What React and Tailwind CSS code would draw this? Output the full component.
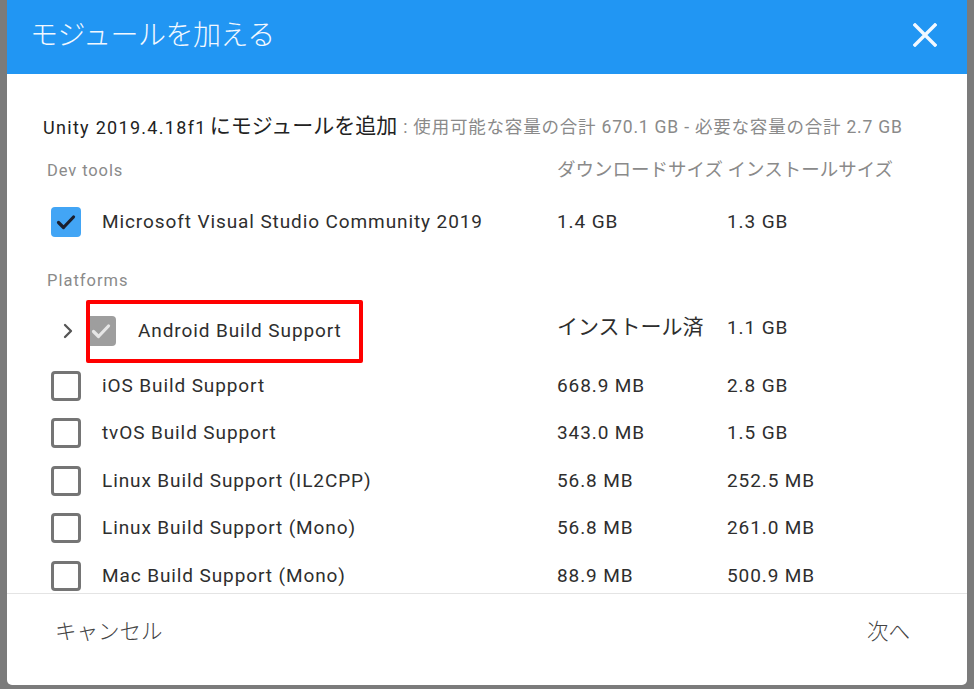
import { ChevronRight } from 'lucide-react';

const jp = { fontFamily: 'Roboto, "Noto Sans CJK JP", sans-serif' };

const platforms = [
  { name: 'iOS Build Support', dl: '668.9 MB', size: '2.8 GB' },
  { name: 'tvOS Build Support', dl: '343.0 MB', size: '1.5 GB' },
  { name: 'Linux Build Support (IL2CPP)', dl: '56.8 MB', size: '252.5 MB' },
  { name: 'Linux Build Support (Mono)', dl: '56.8 MB', size: '261.0 MB' },
  { name: 'Mac Build Support (Mono)', dl: '88.9 MB', size: '500.9 MB' },
];

function Check({ color = '#1b1f2e' }) {
  return (
    <svg width="30" height="30" viewBox="0 0 30 30">
      <path d="M7.5 15.5 L12.5 20.5 L22.5 10" fill="none" stroke={color} strokeWidth="3.2" strokeLinecap="round" strokeLinejoin="round" />
    </svg>
  );
}

function EmptyBox() {
  return <div className="w-[30px] h-[30px] rounded-[4px] border-[3px] border-[#757575] bg-white shrink-0" />;
}

export default function App() {
  return (
    <div className="h-[689px] w-[974px] bg-[#7b7b7b] flex pl-[7px] overflow-hidden" style={jp}>
      <div className="w-[960px] h-[685px] bg-white rounded-b-[5px] flex flex-col overflow-hidden">
        {/* Header */}
        <div className="h-[74px] bg-[#2196f3] flex items-center justify-between pl-[23px] pr-[30px] shrink-0">
          <span className="text-[28px] font-light text-[#f2f8ff] tracking-[-0.5px] mt-[-3px]">モジュールを加える</span>
          <svg width="24" height="24" viewBox="0 0 24 24" className="mt-[-4px]">
            <path d="M2 2 L22 22 M22 2 L2 22" stroke="#f2f8ff" strokeWidth="3.4" strokeLinecap="square" />
          </svg>
        </div>

        {/* Body (scroll area) */}
        <div className="flex-1 min-h-0 overflow-hidden">
          <div className="h-[24px] mt-[41px] pl-[36px] flex items-center whitespace-nowrap">
            <span className="text-[18px] tracking-[1.3px] text-[#222]">Unity 2019.4.18f1 </span>
            <span className="text-[21px] text-[#222] ml-[3px]">にモジュールを追加</span>
            <span className="text-[17.5px] tracking-[0.8px] text-[#8a8a8a] ml-[6px]">: 使用可能な容量の合計 670.1 GB - 必要な容量の合計 2.7 GB</span>
          </div>

          <div className="h-[24px] mt-[20px] flex items-center text-[16.5px] tracking-[0.9px] text-[#8a8a8a]">
            <span className="pl-[40px] w-[550px]">Dev tools</span>
            <span className="whitespace-nowrap text-[18.5px] tracking-normal">ダウンロードサイズ インストールサイズ</span>
          </div>

          <div className="h-[48px] mt-[15px] flex items-center text-[19px] tracking-[0.9px] text-[#2e2e2e]">
            <div className="pl-[44px] w-[95px] shrink-0">
              <div className="w-[30px] h-[30px] rounded-[4px] bg-[#42a5f5] flex items-center justify-center">
                <Check />
              </div>
            </div>
            <span className="w-[455px]">Microsoft Visual Studio Community 2019</span>
            <span className="w-[170px]">1.4 GB</span>
            <span>1.3 GB</span>
          </div>

          <div className="h-[24px] mt-[23px] pl-[40px] flex items-center text-[16.5px] tracking-[1px] text-[#8a8a8a]">Platforms</div>

          <div className="relative h-[58px] mt-[9px] flex items-center text-[19px] tracking-[0.9px] text-[#2e2e2e]">
            <div className="w-[131px] shrink-0 flex items-center">
              <ChevronRight className="ml-[49px] text-[#555]" size={24} strokeWidth={2.3} />
              <div className="ml-[6px] w-[30px] h-[30px] rounded-[4px] bg-[#9e9e9e] flex items-center justify-center">
                <Check color="#e6e6e6" />
              </div>
            </div>
            <span className="w-[419px]">Android Build Support</span>
            <span className="w-[170px] mt-[-6px] text-[21px] tracking-normal">インストール済</span>
            <span className="mt-[-6px]">1.1 GB</span>
            <div className="absolute left-[79px] top-[-2px] w-[277px] h-[63px] border-[4px] border-[#ff0000] rounded-[2px]" />
          </div>

          <div className="mt-[2px]">
            {platforms.map((p) => (
              <div key={p.name} className="h-[47.5px] flex items-center text-[19px] tracking-[0.9px] text-[#2e2e2e]">
                <div className="pl-[44px] w-[95px] shrink-0">
                  <EmptyBox />
                </div>
                <span className="w-[455px]">{p.name}</span>
                <span className="w-[170px]">{p.dl}</span>
                <span>{p.size}</span>
              </div>
            ))}
          </div>
        </div>

        {/* Footer */}
        <div className="h-[92px] shrink-0 border-t border-[#e4e4e4] flex items-start justify-between pt-[26px] pl-[48px] pr-[57px] text-[21.5px] font-light text-[#444]">
          <span className="h-[24px] flex items-center">キャンセル</span>
          <span className="h-[24px] flex items-center">次へ</span>
        </div>
      </div>
    </div>
  );
}
